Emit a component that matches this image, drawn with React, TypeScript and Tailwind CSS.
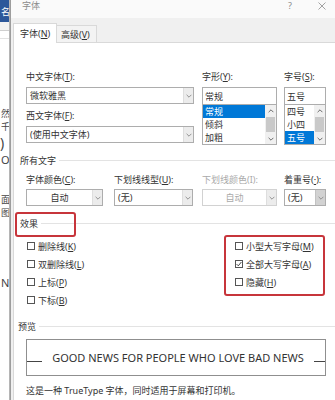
import React from "react";

const FONT = "[font-family:'Noto_Sans','Noto_Sans_CJK_SC',sans-serif]";

function Chevron({ up = false, color = "#8a8a8a" }: { up?: boolean; color?: string }) {
  return (
    <svg width="6" height="4" viewBox="0 0 6 4" className={up ? "rotate-180" : ""}>
      <path d="M0.6 0.8 L3 3.2 L5.4 0.8" fill="none" stroke={color} strokeWidth="0.9" />
    </svg>
  );
}

function U({ children }: { children: React.ReactNode }) {
  return <span className="underline underline-offset-[1px] decoration-[0.5px]">{children}</span>;
}

function Label({ children, disabled = false }: { children: React.ReactNode; disabled?: boolean }) {
  return (
    <div
      className={`h-[11px] text-[9px] leading-[11px] whitespace-nowrap ${
        disabled ? "text-[#a9a9a9]" : "text-[#333]"
      }`}
    >
      {children}
    </div>
  );
}

function Combo({
  children,
  center = false,
  disabled = false,
  dark = false,
}: {
  children: React.ReactNode;
  center?: boolean;
  disabled?: boolean;
  dark?: boolean;
}) {
  return (
    <div
      className={`h-[17px] flex border bg-white ${
        disabled ? "border-[#d2d2d2]" : "border-[#adadad]"
      }`}
    >
      <div
        className={`flex-1 flex items-center px-[3px] text-[9px] leading-[11px] whitespace-nowrap ${
          center ? "justify-center" : ""
        } ${disabled ? "text-[#a9a9a9]" : "text-[#333]"}`}
      >
        {children}
      </div>
      <div
        className={`w-[10px] flex items-center justify-center border-l ${
          dark ? "bg-[#d2d2d2] border-[#c2c2c2]" : "bg-[#ececec] border-[#dedede]"
        }`}
      >
        <Chevron />
      </div>
    </div>
  );
}

function ListBox({ items, selected }: { items: string[]; selected: number }) {
  return (
    <div className="h-[41px] flex border border-[#adadad] bg-white">
      <div className="flex-1 flex flex-col">
        {items.map((it, i) => (
          <div
            key={it}
            className={`h-[13px] flex items-center pl-[2px] text-[9px] leading-[11px] ${
              i === selected ? "bg-[#0078d7] text-white" : "text-[#333]"
            }`}
          >
            {it}
          </div>
        ))}
      </div>
      <div className="w-[11px] flex flex-col bg-[#f0f0f0]">
        <div className="h-[11px] flex items-center justify-center">
          <Chevron up color="#606060" />
        </div>
        <div className="flex-1 flex flex-col px-[1px] py-[1px]">
          <div className="flex-1 bg-[#c9c9c9]" />
        </div>
        <div className="h-[11px] flex items-center justify-center">
          <Chevron color="#606060" />
        </div>
      </div>
    </div>
  );
}

function Check({ checked = false, children }: { checked?: boolean; children: React.ReactNode }) {
  return (
    <div className="h-[18px] flex items-center gap-[3px]">
      <div className="w-[8px] h-[8px] border border-[#555] bg-white flex items-center justify-center">
        {checked && (
          <svg width="6" height="6" viewBox="0 0 6 6">
            <path d="M0.6 3.1 L2.3 4.8 L5.4 1" fill="none" stroke="#333" strokeWidth="0.9" />
          </svg>
        )}
      </div>
      <span className="text-[9px] leading-[11px] text-[#333] whitespace-nowrap">{children}</span>
    </div>
  );
}

function Header({ children, pad = "pl-[6px]" }: { children: React.ReactNode; pad?: string }) {
  return (
    <div className={`h-[11px] flex items-center gap-[3px] ${pad}`}>
      <span className="text-[9px] leading-[11px] text-[#333] whitespace-nowrap">{children}</span>
      <div className="flex-1 h-px bg-[#e3e3e3]" />
    </div>
  );
}

export default function App() {
  return (
    <div className={`w-[335px] h-[400px] flex overflow-hidden bg-white ${FONT}`}>
      {/* background Word window, mostly hidden */}
      <div className="w-[10px] shrink-0 flex flex-col overflow-hidden bg-white border-r border-[#b5b5b5] text-[9px] leading-[11px] text-[#444]">
        <div className="h-[22px] bg-[#2b579a] flex items-center text-white whitespace-nowrap">
          <span className="pl-[1px]">名</span>
        </div>
        <div className="h-[9px] bg-[#f2f2f2] border-b border-[#cfcfcf]" />
        <div className="h-[8px] border-b border-[#e2e2e2]" />
        <div className="h-[69px]" />
        <div className="h-[13px] whitespace-nowrap pl-[1px]">然</div>
        <div className="h-[13px] whitespace-nowrap pl-[1px]">千</div>
        <div className="h-[17px] whitespace-nowrap text-[14px] leading-[17px]">)</div>
        <div className="h-[17px] whitespace-nowrap text-[11px] leading-[17px] pl-[1px]">OC</div>
        <div className="h-[26px]" />
        <div className="h-[13px] whitespace-nowrap pl-[1px]">面</div>
        <div className="h-[13px] whitespace-nowrap pl-[1px]">图</div>
        <div className="h-[56px]" />
        <div className="h-[14px] whitespace-nowrap text-[11px] leading-[14px] pl-[1px]">N</div>
      </div>

      {/* dialog */}
      <div className="flex-1 flex flex-col bg-[#f0f0f0] border-l border-[#9d9d9d]">
        {/* title bar */}
        <div className="h-[18px] shrink-0 bg-[#fafafa] flex items-start text-[9px] leading-[11px] text-[#8c8c8c]">
          <span className="ml-[11px]">字体</span>
          <span className="ml-auto mr-[14px] w-[10px] text-center">?</span>
          <div className="w-[26px] flex justify-center pt-[2px]">
            <svg width="8" height="8" viewBox="0 0 8 8">
              <path d="M0.5 0.5 L7.5 7.5 M7.5 0.5 L0.5 7.5" stroke="#8c8c8c" strokeWidth="0.8" />
            </svg>
          </div>
        </div>

        {/* tabs */}
        <div className="h-[24px] shrink-0 flex items-end pl-[2px] text-[9px] leading-[11px] text-[#333]">
          <div className="h-[20px] w-[44px] -mb-px relative z-10 bg-white border border-b-0 border-[#d9d9d9] flex items-center pl-[6px] whitespace-nowrap">
            字体(<U>N</U>)
          </div>
          <div className="h-[17px] w-[40px] bg-[#f3f3f3] border border-b-0 border-l-0 border-[#d9d9d9] flex items-center pl-[4px] whitespace-nowrap">
            高级(<U>V</U>)
          </div>
        </div>

        {/* tab page */}
        <div className="flex-1 ml-[2px] bg-white border-l border-t border-[#d9d9d9] flex flex-col">
          {/* fonts */}
          <div className="mt-[28px] pl-[12px] flex items-start">
            <div className="w-[168px] flex flex-col">
              <Label>
                中文字体(<U>T</U>):
              </Label>
              <div className="mt-[5px]">
                <Combo>微软雅黑</Combo>
              </div>
              <div className="mt-[6px]">
                <Label>
                  西文字体(<U>F</U>):
                </Label>
              </div>
              <div className="mt-[5px]">
                <Combo>(使用中文字体)</Combo>
              </div>
            </div>
            <div className="w-[75px] ml-[8px] flex flex-col">
              <Label>
                字形(<U>Y</U>):
              </Label>
              <div className="mt-[5px] h-[17px] border border-b-0 border-[#adadad] flex items-center pl-[2px] text-[9px] leading-[11px] text-[#333]">
                常规
              </div>
              <ListBox items={["常规", "倾斜", "加粗"]} selected={0} />
            </div>
            <div className="w-[42px] ml-[7px] flex flex-col">
              <Label>
                字号(<U>S</U>):
              </Label>
              <div className="mt-[5px] h-[17px] border border-b-0 border-[#adadad] flex items-center pl-[2px] text-[9px] leading-[11px] text-[#333]">
                五号
              </div>
              <ListBox items={["四号", "小四", "五号"]} selected={2} />
            </div>
          </div>

          {/* all text */}
          <div className="mt-[10px]">
            <Header>所有文字</Header>
          </div>
          <div className="mt-[8px] pl-[12px] flex items-start">
            <div className="w-[77px] flex flex-col">
              <Label>
                字体颜色(<U>C</U>):
              </Label>
              <div className="mt-[4px]">
                <Combo center>自动</Combo>
              </div>
            </div>
            <div className="w-[79px] ml-[11px] flex flex-col">
              <Label>
                下划线线型(<U>U</U>):
              </Label>
              <div className="mt-[4px]">
                <Combo>(无)</Combo>
              </div>
            </div>
            <div className="w-[75px] ml-[9px] flex flex-col">
              <Label disabled>下划线颜色(I):</Label>
              <div className="mt-[4px]">
                <Combo center disabled>
                  自动
                </Combo>
              </div>
            </div>
            <div className="w-[42px] ml-[7px] flex flex-col">
              <Label>
                着重号(<U>·</U>):
              </Label>
              <div className="mt-[4px]">
                <Combo dark>(无)</Combo>
              </div>
            </div>
          </div>

          {/* effects */}
          <div className="mt-[12px] relative">
            <Header>效果</Header>
            <div className="absolute left-[1px] top-[-6px] w-[61px] h-[25px] border-2 border-[#c7353b] rounded-[3px]" />
          </div>
          <div className="mt-[8px] relative flex">
            <div className="w-[221px] pl-[13px] flex flex-col">
              <Check>
                删除线(<U>K</U>)
              </Check>
              <Check>
                双删除线(<U>L</U>)
              </Check>
              <Check>
                上标(<U>P</U>)
              </Check>
              <Check>
                下标(<U>B</U>)
              </Check>
            </div>
            <div className="flex flex-col">
              <Check>
                小型大写字母(<U>M</U>)
              </Check>
              <Check checked>
                全部大写字母(<U>A</U>)
              </Check>
              <Check>
                隐藏(<U>H</U>)
              </Check>
            </div>
            <div className="absolute left-[210px] top-[-2px] w-[101px] h-[61px] border-2 border-[#c7353b] rounded-[3px]" />
          </div>

          {/* preview */}
          <div className="mt-[12px]">
            <Header pad="pl-[4px]">预览</Header>
          </div>
          <div className="mt-[7px] ml-[12px] w-[300px] h-[37px] border border-[#8f8f8f] flex items-center">
            <div className="w-[15px] h-px bg-[#444] mt-[8px]" />
            <div className="flex-1 text-center text-[11px] leading-[14px] text-[#333] whitespace-nowrap">
              GOOD NEWS FOR PEOPLE WHO LOVE BAD NEWS
            </div>
            <div className="w-[11px] h-px bg-[#444] mt-[8px]" />
          </div>
          <div className="mt-[9px] pl-[12px] text-[9px] leading-[11px] text-[#333] whitespace-nowrap">
            这是一种 TrueType 字体，同时适用于屏幕和打印机。
          </div>
        </div>
      </div>
    </div>
  );
}
